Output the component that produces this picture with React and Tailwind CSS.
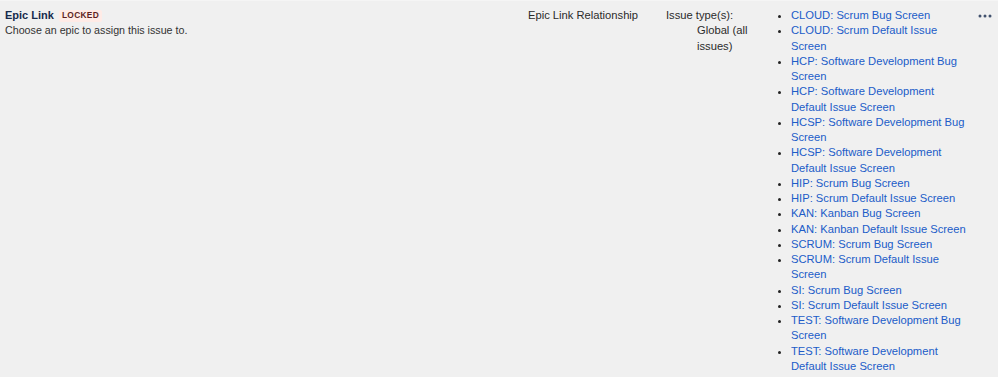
const SCREENS = [
  "CLOUD: Scrum Bug Screen",
  "CLOUD: Scrum Default Issue Screen",
  "HCP: Software Development Bug Screen",
  "HCP: Software Development Default Issue Screen",
  "HCSP: Software Development Bug Screen",
  "HCSP: Software Development Default Issue Screen",
  "HIP: Scrum Bug Screen",
  "HIP: Scrum Default Issue Screen",
  "KAN: Kanban Bug Screen",
  "KAN: Kanban Default Issue Screen",
  "SCRUM: Scrum Bug Screen",
  "SCRUM: Scrum Default Issue Screen",
  "SI: Scrum Bug Screen",
  "SI: Scrum Default Issue Screen",
  "TEST: Software Development Bug Screen",
  "TEST: Software Development Default Issue Screen",
];

function MoreIcon() {
  return (
    <svg width="14" height="4" viewBox="0 0 14 4" className="text-[#42526e]">
      <circle cx="2" cy="2" r="1.5" fill="currentColor" />
      <circle cx="7" cy="2" r="1.5" fill="currentColor" />
      <circle cx="12" cy="2" r="1.5" fill="currentColor" />
    </svg>
  );
}

export default function App() {
  return (
    <div className="w-[998px] h-[377px] overflow-hidden bg-[#f0f0f0] border-t border-[#f5f5f5] font-['Liberation_Sans',Arial,sans-serif] text-[11.2px] leading-[15.25px] text-[#2b2b2b]">
      <div className="flex pt-[7px]">
        {/* field name */}
        <div className="w-[528px] pl-[5px]">
          <div className="flex items-center gap-[5px]">
            <span className="font-bold text-[11px] text-[#172b4d]">Epic Link</span>
            <span className="bg-[#ffebe6] text-[#5e1f1f] text-[8.4px] leading-[11px] py-[0.5px] font-bold px-[3px] tracking-[0.3px] rounded-[2px]">
              LOCKED
            </span>
          </div>
          <p className="text-[10.7px] text-[#333]">
            Choose an epic to assign this issue to.
          </p>
        </div>

        {/* type */}
        <div className="w-[138px]">Epic Link Relationship</div>

        {/* context */}
        <dl className="w-[105px]">
          <dt>Issue type(s):</dt>
          <dd className="pl-[31px]">Global (all issues)</dd>
        </dl>

        {/* screens */}
        <ul className="w-[196px] pl-[20px] list-disc marker:text-[#222]">
          {SCREENS.map((s) => (
            <li key={s}>
              <a className="text-[#205cc8]">{s}</a>
            </li>
          ))}
        </ul>

        <div className="pl-[11px] pt-[6px]">
          <MoreIcon />
        </div>
      </div>
    </div>
  );
}
